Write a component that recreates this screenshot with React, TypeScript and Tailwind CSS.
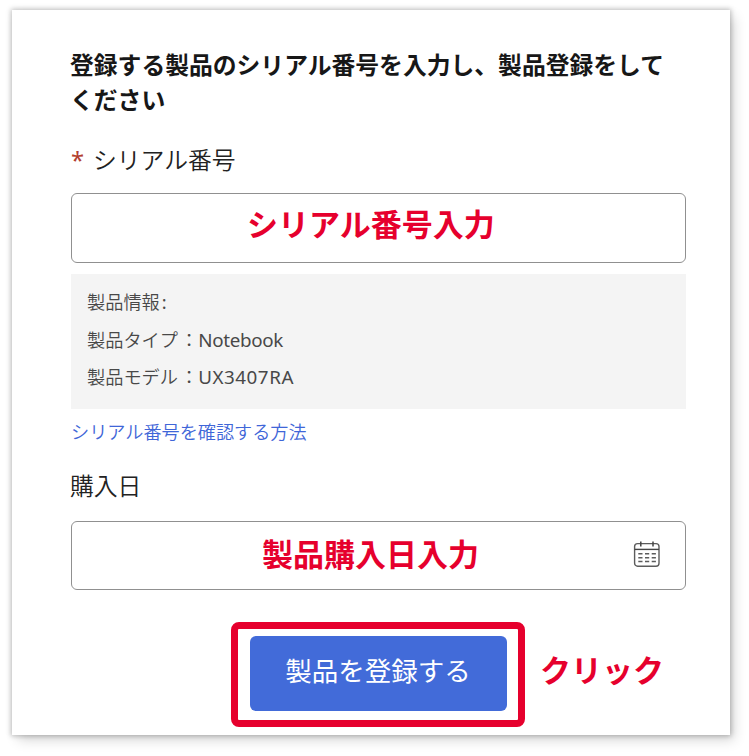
import type { ReactNode } from "react";

function CalendarIcon() {
  return (
    <svg width="28" height="28" viewBox="0 0 28 28" fill="none" stroke="#5c5c5c" strokeWidth="1.4">
      <rect x="1.6" y="3.6" width="24.4" height="22.6" rx="3" />
      <path d="M1.6 9.4H26" stroke="#444" />
      <path d="M7.8 1.5V6.5M20 1.5V6.5" stroke="#444" strokeWidth="1.5" />
      <path
        d="M5.3 13.8H9.5M12 13.8H16.2M18.7 13.8H22.9M5.3 17.7H9.5M12 17.7H16.2M18.7 17.7H22.9M5.3 21.6H9.5M12 21.6H16.2M18.7 21.6H22.9"
        strokeWidth="1.5"
      />
    </svg>
  );
}

function Field({ hint, className, children }: { hint: string; className: string; children?: ReactNode }) {
  return (
    <div
      className={`flex w-[615px] items-center rounded-[6px] border border-[#909090] ${className}`}
    >
      <span className="text-[31px] leading-none font-bold whitespace-nowrap text-[#e6002d]">{hint}</span>
      {children}
    </div>
  );
}

export default function App() {
  return (
    <div className="h-[756px] w-[749px] overflow-hidden bg-white pt-[10px] pl-[12px] font-['Noto_Sans','Noto_Sans_CJK_JP',sans-serif]">
      <main
        lang="ja"
        className="flex h-[725px] w-[718px] flex-col items-start bg-white pl-[59px] shadow-[0_0_5px_1px_rgba(0,0,0,0.25),5px_6px_12px_-1px_rgba(0,0,0,0.16)]"
      >
        <h1 className="mt-[37px] -ml-px h-[68px] font-['Noto_Sans_CJK_JP',sans-serif] text-[23.8px] leading-[34.5px] font-bold whitespace-nowrap text-[#171717]">
          登録する製品のシリアル番号を入力し、製品登録をして
          <br />
          ください
        </h1>
        <label className="mt-[27px] flex h-[36px] items-center text-[23.8px] leading-[36px] font-[350] text-[#222]">
          <span className="w-[22px] font-normal text-[#b3402f]">*</span>
          シリアル番号
        </label>
        <Field hint="シリアル番号入力" className="mt-[15px] h-[70px] pb-[7px] pl-[175px]" />
        <section className="mt-[11px] h-[135px] w-[615px] bg-[#f4f4f4] pt-[10px] pl-[16px] text-[18.2px] leading-[37.5px] font-[350] text-[#484848]">
          <p>製品情報<span className="ml-[2px] font-normal">:</span></p>
          <p>
            製品タイプ<span className="ml-[2px]">：</span>
            <span className="font-['Noto_Sans'] text-[18.8px] font-normal tracking-[-0.3px]">Notebook</span>
          </p>
          <p>
            製品モデル<span className="ml-[2px]">：</span>
            <span className="font-['Noto_Sans'] text-[18.8px] font-normal tracking-[0.55px]">UX3407RA</span>
          </p>
        </section>
        <a className="mt-[9px] text-[18.15px] leading-[28px] font-[350] text-[#3f66d8]">シリアル番号を確認する方法</a>
        <label className="mt-[22px] -ml-px text-[23.8px] leading-[36px] font-[350] text-[#222]">購入日</label>
        <Field hint="製品購入日入力" className="mt-[17px] h-[69px] justify-between pr-[24px] pb-[3px] pl-[190px]">
          <CalendarIcon />
        </Field>
        <div className="mt-[32px] ml-[160px] flex items-center">
          <div className="flex h-[105px] w-[294px] items-start justify-center rounded-[8px] border-[7px] border-[#e6002d] pt-[7px]">
            <button className="h-[75px] w-[257px] rounded-[6px] bg-[#426bd9] pb-[4px] text-[26.5px] leading-none text-white">
              製品を登録する
            </button>
          </div>
          <span className="mb-[8px] ml-[15px] text-[31px] leading-none font-bold text-[#e6002d]">クリック</span>
        </div>
      </main>
    </div>
  );
}
